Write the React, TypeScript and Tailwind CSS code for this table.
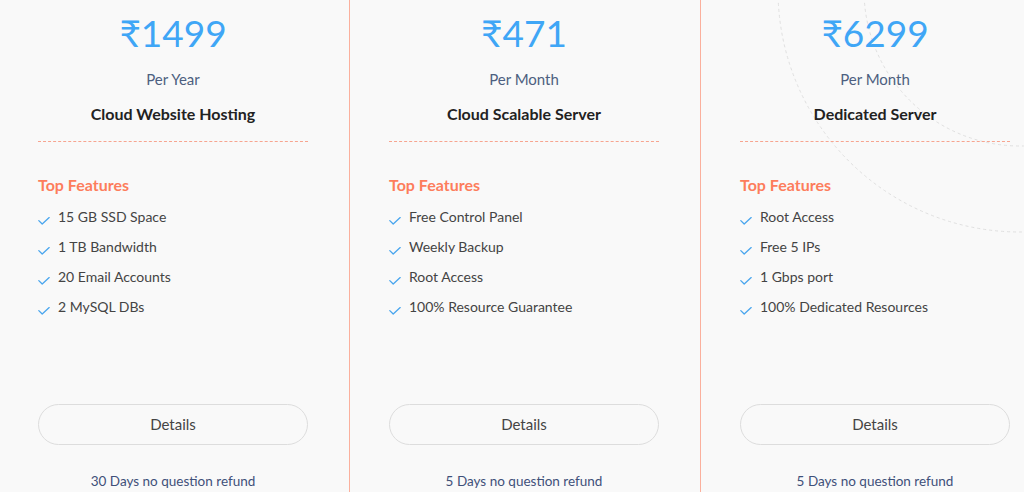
const plans = [
  {
    price: '₹1499',
    period: 'Per Year',
    title: 'Cloud Website Hosting',
    features: ['15 GB SSD Space', '1 TB Bandwidth', '20 Email Accounts', '2 MySQL DBs'],
    refund: '30 Days no question refund',
  },
  {
    price: '₹471',
    period: 'Per Month',
    title: 'Cloud Scalable Server',
    features: ['Free Control Panel', 'Weekly Backup', 'Root Access', '100% Resource Guarantee'],
    refund: '5 Days no question refund',
  },
  {
    price: '₹6299',
    period: 'Per Month',
    title: 'Dedicated Server',
    features: ['Root Access', 'Free 5 IPs', '1 Gbps port', '100% Dedicated Resources'],
    refund: '5 Days no question refund',
    rings: true,
  },
]

const Check = () => (
  <svg width="12" height="8" viewBox="0 0 12 8" fill="none" className="shrink-0 translate-y-[5px]">
    <path d="M0.8 3.6 L4.2 7 L11.2 0.6" stroke="#4aa6ee" strokeWidth="1.3" strokeLinecap="round" strokeLinejoin="round" />
  </svg>
)

const Rings = () => (
  <svg className="absolute -left-px top-0 pointer-events-none" width="360" height="492" viewBox="700 0 360 492" fill="none">
    <circle cx="1020" cy="-10" r="156" stroke="#e0e0e0" strokeWidth="1" strokeDasharray="3 3" />
    <circle cx="1020" cy="-10" r="242" stroke="#e0e0e0" strokeWidth="1" strokeDasharray="3 3" />
  </svg>
)

const PlanCard = ({
  plan,
  first,
}: {
  plan: (typeof plans)[number]
  first?: boolean
}) => {
  return (
    <div
      className={`relative w-[351px] shrink-0 h-[492px] border-l border-[#fbb09d] pl-[39px] pr-[41px] ${
        first ? '-ml-[2px]' : ''
      }`}
    >
      {plan.rings && <Rings />}
      <div className="relative">
        <div className="pt-[9px] text-center text-[37px] leading-[48px] text-[#3fa6f6] font-normal">{plan.price}</div>
        <div className="mt-[10px] text-center text-[15px] leading-[24px] text-[#4d5f80]">{plan.period}</div>
        <div className="mt-[11px] text-center text-[16px] leading-[24px] font-bold text-[#222222]">{plan.title}</div>
        <div className="mt-[15px] border-t border-dashed border-[#f7a590]"></div>
        <div className="mt-[31px] text-[16px] leading-[24px] font-bold text-[#fd7d5c]">Top Features</div>
        <ul className="mt-[4px]">
          {plan.features.map((f, i) => (
            <li key={i} className="flex items-center gap-[8px] h-[30px] text-[14px] text-[#444444]">
              <Check />
              <span>{f}</span>
            </li>
          ))}
        </ul>
        <button className="mt-[83px] w-full h-[41px] rounded-full border border-[#dddddd] text-[15px] text-[#444444] bg-transparent">
          Details
        </button>
        <div className="mt-[24px] text-center text-[13.5px] leading-[24px] text-[#3f5079]">{plan.refund}</div>
      </div>
    </div>
  )
}

export default function App() {
  return (
    <div
      className="w-[1024px] h-[492px] overflow-hidden bg-[#f9f9f9] flex"
      style={{ fontFamily: 'Lato, "DejaVu Sans", sans-serif' }}
    >
      {plans.map((p, i) => (
        <PlanCard key={i} plan={p} first={i === 0} />
      ))}
    </div>
  )
}
